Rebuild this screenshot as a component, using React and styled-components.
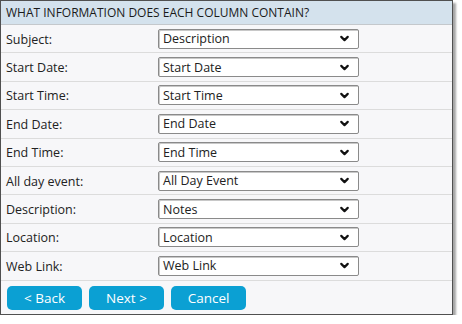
import React from "react";
import styled, { createGlobalStyle } from "styled-components";
import { ChevronDown } from "lucide-react";

const Global = createGlobalStyle`
  html, body {
    margin: 0;
    padding: 0;
    background: #ffffff;
  }
  body {
    font-family: "Open Sans", "Noto Sans", sans-serif;
  }
`;

const Panel = styled.div`
  width: 451px;
  border: 1px solid #505050;
  background: #f7f7f9;
  box-shadow: 3px 3px 2px rgba(0, 0, 0, 0.35);
`;

const Header = styled.div`
  height: 23px;
  display: flex;
  align-items: center;
  padding-left: 5px;
  background: #d4e2ed;
  border-bottom: 1px solid #c4c8cc;
  font-size: 12px;
  color: #1a1a1a;
`;

const Row = styled.div`
  height: 27.4px;
  display: grid;
  grid-template-columns: 152px 201px;
  align-items: center;
  padding-left: 5px;
  border-bottom: 1px solid #dcdcdc;
  font-size: 12.5px;
  color: #222;
`;

const Label = styled.span`
  padding-top: 1px;
`;

const Select = styled.div`
  height: 20px;
  box-sizing: border-box;
  display: flex;
  align-items: center;
  justify-content: space-between;
  padding: 0 7px 0 4px;
  background: #fff;
  border: 1px solid #8a8a8a;
  border-radius: 2px;
  box-shadow: inset 1px 1px 0 #c8c8c8;
  font-size: 12.5px;
  color: #222;
`;

const Footer = styled.div`
  display: flex;
  gap: 7px;
  padding: 5px 6px 4px;
`;

const Button = styled.button`
  width: 75px;
  height: 24px;
  border: none;
  border-radius: 5px;
  background: #0ba0d3;
  color: #fff;
  font-family: "Open Sans", "Noto Sans", sans-serif;
  font-size: 13.5px;
  padding: 0;
  cursor: pointer;
`;

const fields = [
  ["Subject:", "Description"],
  ["Start Date:", "Start Date"],
  ["Start Time:", "Start Time"],
  ["End Date:", "End Date"],
  ["End Time:", "End Time"],
  ["All day event:", "All Day Event"],
  ["Description:", "Notes"],
  ["Location:", "Location"],
  ["Web Link:", "Web Link"],
];

export default function App() {
  return (
    <>
      <Global />
      <Panel>
        <Header>WHAT INFORMATION DOES EACH COLUMN CONTAIN?</Header>
        {fields.map(([label, value]) => (
          <Row key={label}>
            <Label>{label}</Label>
            <Select>
              <span>{value}</span>
              <ChevronDown size={13} strokeWidth={4} color="#111" />
            </Select>
          </Row>
        ))}
        <Footer>
          <Button>&lt; Back</Button>
          <Button>Next &gt;</Button>
          <Button>Cancel</Button>
        </Footer>
      </Panel>
    </>
  );
}
